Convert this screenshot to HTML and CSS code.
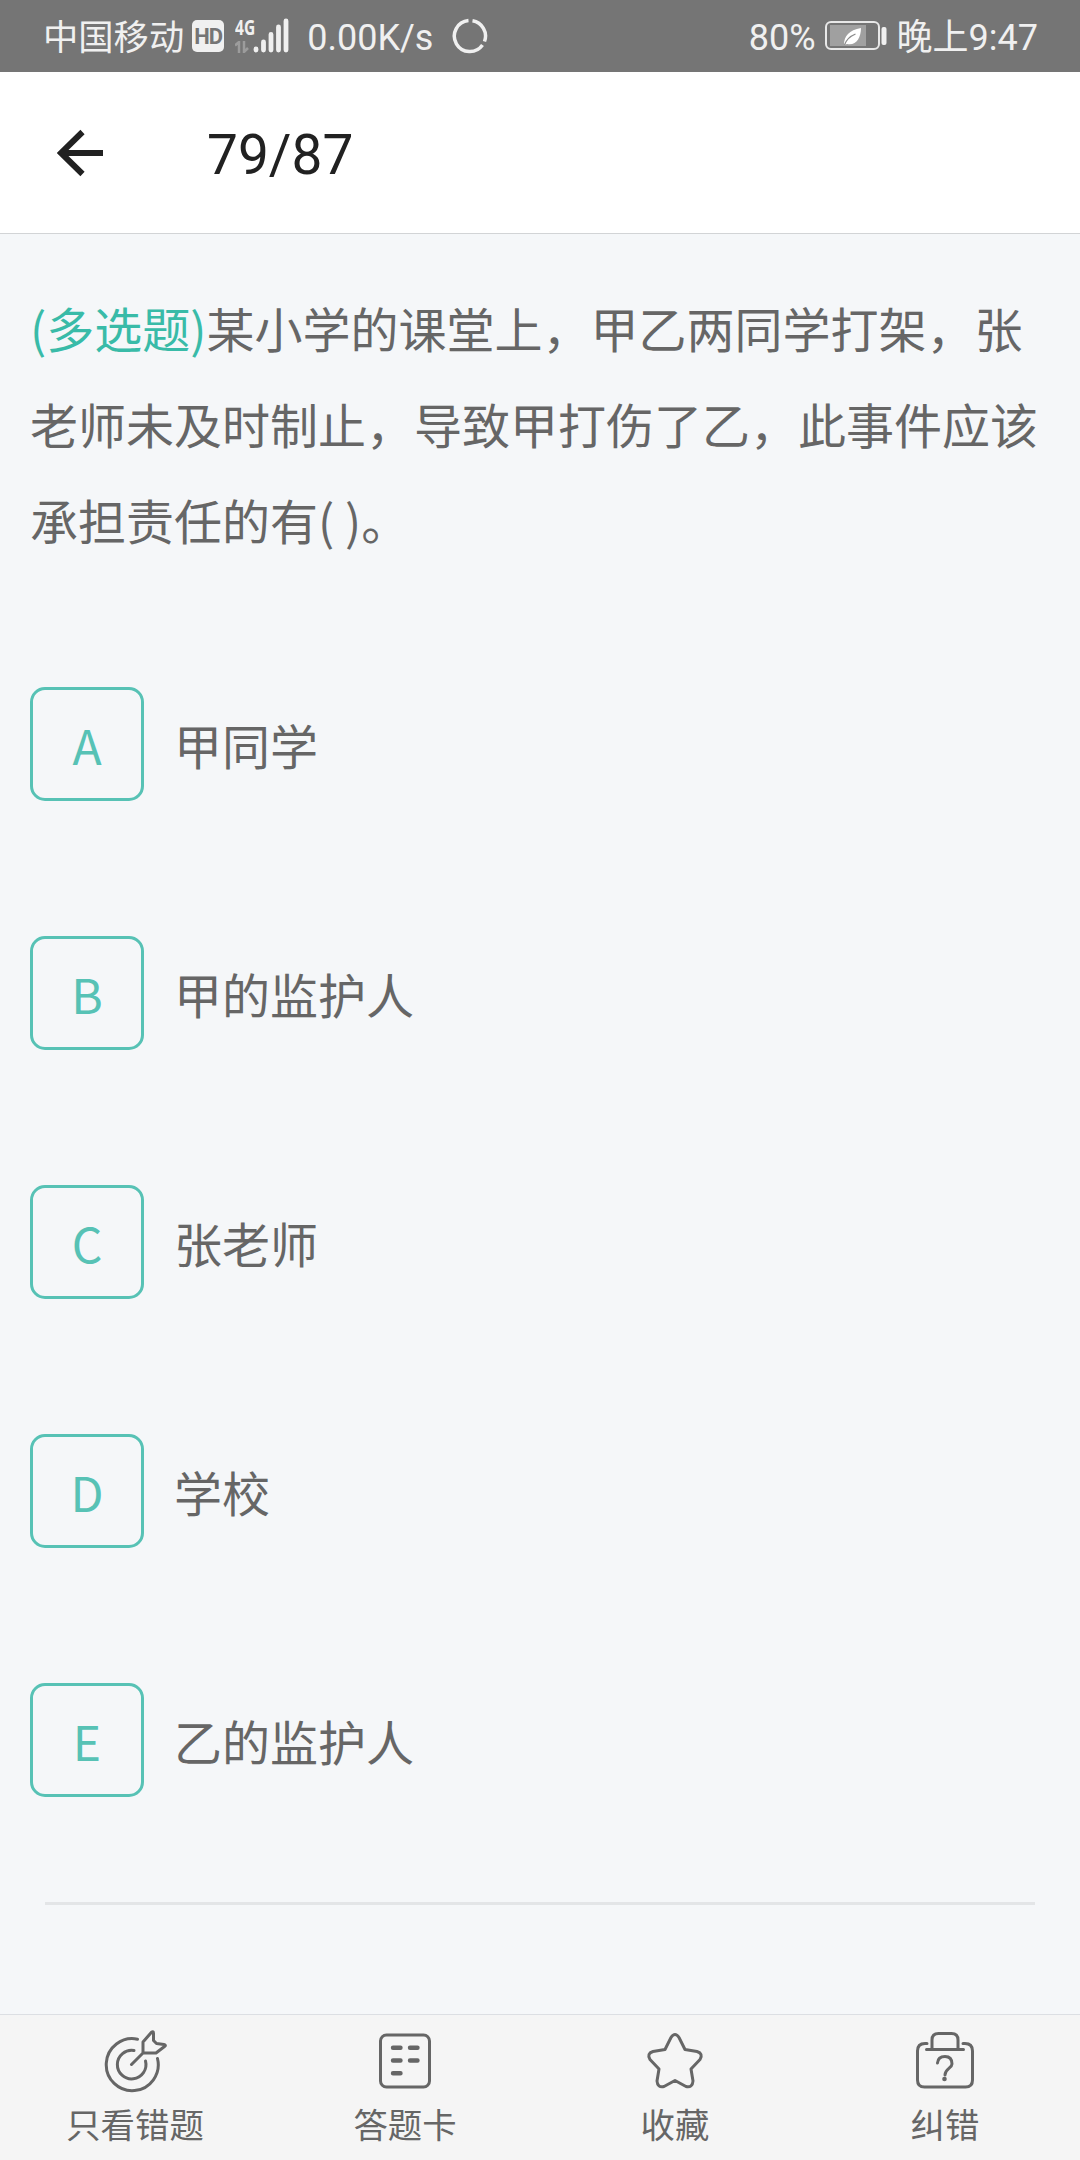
FILE: index.html
```html
<!DOCTYPE html>
<html lang="zh-CN">
<head>
  <meta charset="UTF-8" />
  <title>79/87</title>
  <meta name="viewport" content="width=device-width, initial-scale=1.0"/>
  <link rel="stylesheet" href="styles.css">
</head>
<body>

<div class="status-bar">
  <div class="status-left">
    <span class="carrier">中国移动</span>
    <span class="hd">HD</span>
    <div class="signal">
      <div class="network">
        <span>4G</span>
        <svg width="16" height="12" viewBox="0 0 16 12" fill="none" stroke="#9c9c9c" stroke-width="2.500">
          <path d="M0 4.500l4-3.500v11M9 0v11l4-4"/>
        </svg>
      </div>
      <svg class="bars" width="36" height="36" viewBox="0 0 36 36" fill="none" stroke="#f0f0f0" stroke-width="4.800" stroke-linecap="round">
        <path d="M3 31v1M10.500 24v8M18 16.500v15.500M25.500 9v23M33 3v29"/>
      </svg>
    </div>
    <span class="speed">0.00K/s</span>
    <svg class="ring" width="36" height="36" viewBox="0 0 36 36" fill="none" stroke="#f0f0f0" stroke-width="3.500">
      <path d="M20.500 2.700A15.500 15.500 0 0 1 32.500 23.500M30.500 27A15.500 15.500 0 1 1 16.500 2.600"/>
    </svg>
  </div>
  <div class="status-right">
    <span class="percent">80%</span>
    <svg class="battery" width="62" height="30" viewBox="0 0 62 30">
      <rect x="1" y="1" width="53" height="27" rx="5" fill="none" stroke="#e8e8e8" stroke-width="2"/>
      <rect x="5" y="4" width="36" height="21" fill="#a0a0a0"/>
      <path d="M19 24c0-9 5-15 17-17 0 10-5 18-14 16z" fill="#fff"/>
      <path d="M19.500 24c2-6 6-9 11-11" fill="none" stroke="#8a8a8a" stroke-width="1.300"/>
      <rect x="56.500" y="6" width="5" height="18" rx="2" fill="#f0f0f0"/>
    </svg>
    <span class="clock">晚上9:47</span>
  </div>
</div>

<div class="header">
  <svg class="back" width="46" height="48" viewBox="0 0 46 48" fill="none" stroke="#212121" stroke-width="6">
    <path d="M25.500 3L4 24l21.500 21M4 24h42"/>
  </svg>
  <h1>79/87</h1>
</div>

<div class="content">
  <p class="question"><span class="type">(多选题)</span>某小学的课堂上，甲乙两同学打架，张老师未及时制止，导致甲打伤了乙，此事件应该承担责任的有( )。</p>

  <ul class="options">
    <li><span class="letter">A</span><span>甲同学</span></li>
    <li><span class="letter">B</span><span>甲的监护人</span></li>
    <li><span class="letter">C</span><span>张老师</span></li>
    <li><span class="letter">D</span><span>学校</span></li>
    <li><span class="letter">E</span><span>乙的监护人</span></li>
  </ul>

  <hr>
</div>

<div class="tab-bar">
  <div class="tab">
    <svg width="66" height="66" viewBox="0 0 66 66">
      <path d="M35.500 12.200A26 26 0 1 0 55.500 31.500"/>
      <path d="M32 23.500A14.300 14.300 0 1 0 43.500 34"/>
      <path d="M29.500 37.500L41 26V15L49.500 5.200Q51.500 3.800 51.500 6.500v7l3 3 7.500 1q2.500 .5 .5 2L54 26H41"/>
    </svg>
    <span>只看错题</span>
  </div>
  <div class="tab">
    <svg width="66" height="66" viewBox="0 0 66 66">
      <rect x="8.500" y="8" width="49" height="52" rx="6"/>
      <path stroke-width="4.400" d="M21 20.800h7.500M38 20.800h7.500M21 33.500h7.500M38 33.500h7.500M21 46.300h7.500"/>
    </svg>
    <span>答题卡</span>
  </div>
  <div class="tab">
    <svg width="66" height="66" viewBox="0 0 66 66">
      <path d="M29 10.500Q33 4.500 37 10.500L43 22.500L55 24.500Q61.500 26.500 58 32.500L49 42L51 54Q50.500 61 44 59.500L33 53.500L22 59.500Q15.500 61 15 54L17 42L8 32.500Q4.500 26.500 11 24.500L23 22.500Z"/>
    </svg>
    <span>收藏</span>
  </div>
  <div class="tab">
    <svg width="66" height="66" viewBox="0 0 66 66">
      <path d="M15 16.500h-2Q5.500 16.500 5.500 24v29Q5.500 60 12.500 60h41q7 0 7-7V24q0-7.500-7.500-7.500h-2"/>
      <path d="M14.500 22.500h37M20 22V13q0-6.500 6.500-6.500h13Q46 6.500 46 13v9"/>
      <path d="M25.500 36Q26 29.500 33 29.500T40 37C40 41 33 41.500 33 48"/>
      <circle class="dot" cx="32.500" cy="52" r="2.300"/>
    </svg>
    <span>纠错</span>
  </div>
</div>

</body>
</html>
```
FILE: styles.css
```css
* {
  margin: 0;
  padding: 0;
  box-sizing: border-box;
}

body {
  width: 1080px;
  height: 2160px;
  display: flex;
  flex-direction: column;
  background: #f5f7f9;
  color: #666;
  font-family: "Noto Sans CJK SC", sans-serif;
  overflow: hidden;
}

svg {
  display: block;
  flex-shrink: 0;
}

/* status bar */
.status-bar {
  height: 72px;
  padding: 0 42px 0 43px;
  display: flex;
  justify-content: space-between;
  background: #757575;
  color: #f0f0f0;
  font-family: Roboto, "Noto Sans CJK SC", sans-serif;
  font-size: 36px;
  line-height: 68px;
  white-space: nowrap;
}

.status-left, .status-right {
  display: flex;
  align-items: center;
}

.carrier, .speed, .percent, .clock {
  padding-top: 4px;
}

.carrier {
  font-size: 35.3px;
}

.hd {
  width: 32px;
  height: 32px;
  margin-left: 8px;
  border-radius: 5px;
  background: #f0f0f0;
  color: #757575;
  font-size: 22px;
  font-weight: bold;
  line-height: 33px;
  text-align: center;
  letter-spacing: -1px;
}

.signal {
  display: flex;
  margin-left: 11px;
}

.network {
  width: 18px;
  height: 36px;
  font-family: "Open Sans", sans-serif;
  font-size: 21px;
  font-weight: bold;
  line-height: 18px;
}

.network span {
  display: block;
  width: 27px;
  transform: scaleX(0.74);
  transform-origin: left;
}

.network svg {
  margin-top: 5px;
}

.speed {
  margin-left: 18px;
}

.ring {
  margin-left: 19px;
}

.battery {
  margin: 0 10px 0 9px;
}

/* header */
.header {
  height: 162px;
  display: flex;
  align-items: center;
  padding-left: 57px;
  background: #fff;
  border-bottom: 1px solid #d2d4d6;
}

.header h1 {
  margin-left: 104px;
  padding-top: 4px;
  color: #212121;
  font-family: Roboto, sans-serif;
  font-size: 55px;
  font-weight: normal;
}

/* question */
.content {
  flex: 1;
  padding: 45px 30px 0;
  font-size: 48px;
}

.question {
  width: 1020px;
  line-height: 96px;
}

.type {
  color: #39bba8;
}

.options {
  margin-top: 120px;
  list-style: none;
}

.options li {
  height: 114px;
  margin-bottom: 135px;
  display: flex;
  align-items: center;
  line-height: 108px;
}

.letter {
  width: 114px;
  height: 114px;
  margin-right: 30px;
  border: 3px solid #57c2b5;
  border-radius: 15px;
  color: #57c2b5;
  text-align: center;
}

hr {
  height: 3px;
  margin: -30px 15px 0;
  border: none;
  background: #e3e5e7;
}

/* bottom tabs */
.tab-bar {
  height: 146px;
  display: flex;
  background: #f5f5f5;
  border-top: 1px solid #dcdfe3;
}

.tab {
  flex: 1;
  display: flex;
  flex-direction: column;
  align-items: center;
  padding-top: 12px;
  font-size: 34.4px;
  line-height: 60px;
}

.tab svg {
  fill: none;
  stroke: #666;
  stroke-width: 3;
  stroke-linecap: round;
  stroke-linejoin: round;
}

.tab .dot {
  fill: #666;
  stroke: none;
}
```
